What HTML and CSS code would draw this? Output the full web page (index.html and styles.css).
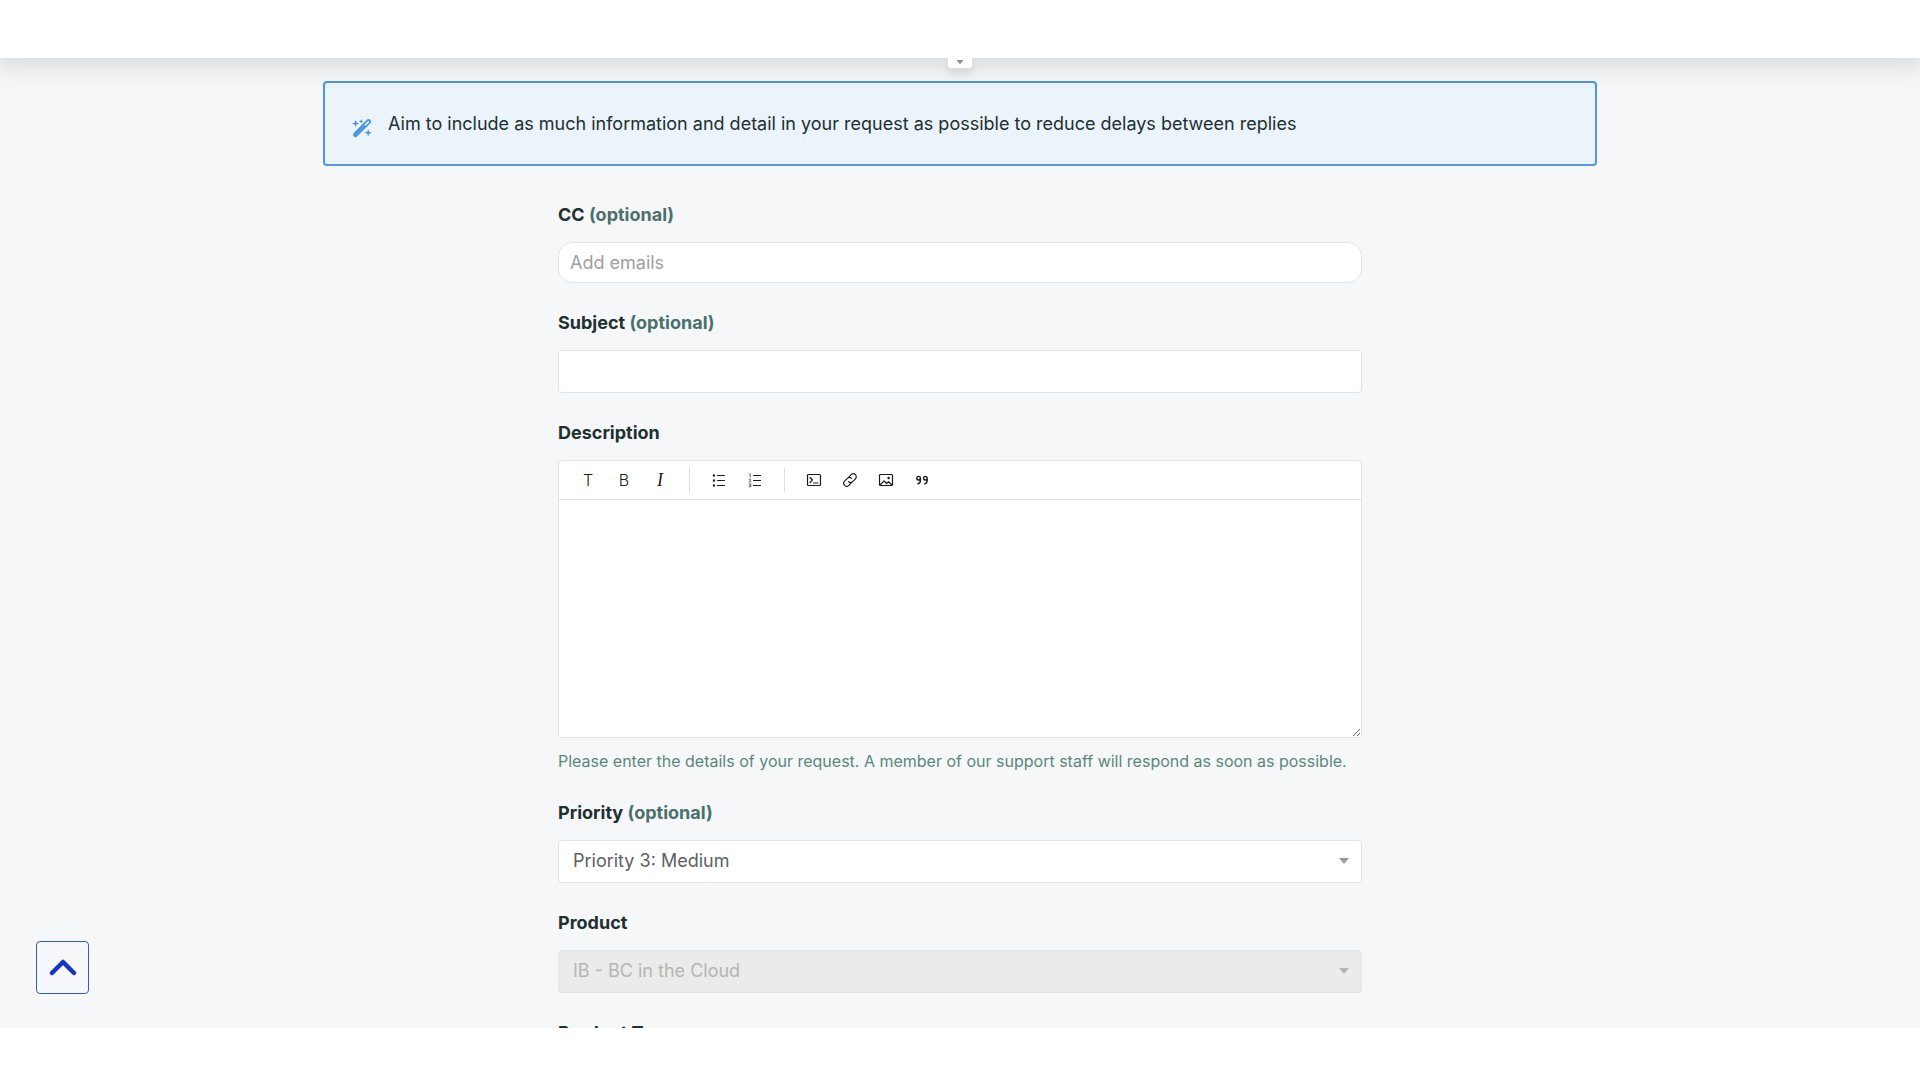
FILE: index.html
```html
<!DOCTYPE html>
<html lang="en">
<head>
  <meta charset="utf-8">
  <title>Submit a request</title>
  <link rel="stylesheet" href="styles.css">
</head>
<body>
  <header class="header">
    <button class="header-toggle" aria-label="Show menu"></button>
  </header>

  <main class="content">
    <div class="notice">
      <svg class="notice-icon" viewBox="0 0 20 20" aria-hidden="true">
        <path d="M3.6 16.6 L16.6 3.6" stroke="#4f95e0" stroke-width="5" stroke-linecap="round"/>
        <path d="M13.4 6.8 L16.4 3.8" stroke="#ebf3fb" stroke-width="1.6" stroke-linecap="round"/>
        <path fill="#4f95e0" d="M3.6 2 L4.6 4.6 L7.2 5.6 L4.6 6.6 L3.6 9.2 L2.6 6.6 L0 5.6 L2.6 4.6Z M9.2 1 L9.9 2.7 L11.6 3.4 L9.9 4.1 L9.2 5.8 L8.5 4.1 L6.8 3.4 L8.5 2.7Z M16.2 11.2 L17.2 13.8 L19.8 14.8 L17.2 15.8 L16.2 18.4 L15.2 15.8 L12.6 14.8 L15.2 13.8Z"/>
      </svg>
      <p class="notice-text">Aim to include as much information and detail in your request as possible to reduce delays between replies</p>
    </div>

    <form class="form">
      <div class="field">
        <label for="cc">CC <span class="optional">(optional)</span></label>
        <input type="text" id="cc" class="input input-cc" placeholder="Add emails">
      </div>

      <div class="field">
        <label for="subject">Subject <span class="optional">(optional)</span></label>
        <input type="text" id="subject" class="input">
      </div>

      <div class="field">
        <label for="description">Description</label>
        <div class="editor">
          <div class="toolbar">
            <button type="button" class="tool" aria-label="Text style">T</button>
            <button type="button" class="tool" aria-label="Bold">B</button>
            <button type="button" class="tool tool-italic" aria-label="Italic">I</button>
            <span class="separator"></span>
            <button type="button" class="tool" aria-label="Bulleted list">
              <svg viewBox="0 0 16 16"><path d="M6.5 3.5h7M6.5 8.5h7M6.5 13.5h7"/><path class="dots" d="M3 3.5h.01M3 8.5h.01M3 13.5h.01"/></svg>
            </button>
            <button type="button" class="tool" aria-label="Numbered list">
              <svg viewBox="0 0 16 16"><path d="M6.5 3.5h7M6.5 8.5h7M6.5 13.5h7"/><path class="thin" d="M2.2 2.4l1-.6v3.4M2 7.2h1.6v1L2 9.8h2M2 11.8h1.8v3H2M2.4 13.3h1.4"/></svg>
            </button>
            <span class="separator"></span>
            <button type="button" class="tool" aria-label="Code block">
              <svg viewBox="0 0 16 16"><rect x="1.5" y="2.5" width="13" height="11" rx="1"/><path d="M4 5.5L6.5 8 4 10.5M7.5 11h4.5"/></svg>
            </button>
            <button type="button" class="tool" aria-label="Link">
              <svg viewBox="0 0 16 16"><path d="M7 4.8l2.2-2.2a2.9 2.9 0 0 1 4.2 4.2L10.6 9.6a2.9 2.9 0 0 1-4.1 0M9 11.2l-2.2 2.2a2.9 2.9 0 0 1-4.2-4.2L5.4 6.4a2.9 2.9 0 0 1 4.1 0"/></svg>
            </button>
            <button type="button" class="tool" aria-label="Image">
              <svg viewBox="0 0 16 16"><rect x="1.5" y="2.5" width="13" height="11" rx="1"/><path d="M2.5 12.5L6 8.8l2.5 2.7 2-1.8 3 2.8"/><path class="dots" d="M10.6 6h.01"/></svg>
            </button>
            <button type="button" class="tool" aria-label="Quote">
              <svg viewBox="0 0 16 16"><path class="quote" d="M6.4 6.2a1.8 1.8 0 1 0-3.6 0 1.8 1.8 0 1 0 3.6 0v2c0 2-.8 3.2-2.4 3.6M13.2 6.2a1.8 1.8 0 1 0-3.6 0 1.8 1.8 0 1 0 3.6 0v2c0 2-.8 3.2-2.4 3.6"/></svg>
            </button>
          </div>
          <textarea id="description" class="editor-text"></textarea>
        </div>
        <p class="hint">Please enter the details of your request. A member of our support staff will respond as soon as possible.</p>
      </div>

      <div class="field">
        <label for="priority">Priority <span class="optional">(optional)</span></label>
        <div class="select-wrapper">
          <select id="priority" class="input">
            <option>Priority 3: Medium</option>
          </select>
        </div>
      </div>

      <div class="field">
        <label for="product">Product</label>
        <div class="select-wrapper disabled">
          <select id="product" class="input" disabled>
            <option>IB - BC in the Cloud</option>
          </select>
        </div>
      </div>

      <div class="field">
        <label for="product-type">Product Type</label>
        <div class="select-wrapper">
          <select id="product-type" class="input">
            <option>-</option>
          </select>
        </div>
      </div>
    </form>
  </main>

  <a href="#" class="back-to-top" aria-label="Back to top">
    <svg viewBox="0 0 28 20"><path d="M3 15L14 4l11 11"/></svg>
  </a>
</body>
</html>
```

FILE: styles.css
```css
* {
  box-sizing: border-box;
  margin: 0;
  padding: 0;
}

body {
  display: flex;
  flex-direction: column;
  height: 100vh;
  padding-bottom: 52px;
  background-color: #fff;
  color: #20302e;
  font-family: Inter, "Liberation Sans", sans-serif;
  font-size: 18px;
  line-height: 24px;
}

.header {
  position: relative;
  flex: none;
  height: 58px;
  background-color: #fff;
  box-shadow: 0 0 28px 6px rgba(0, 0, 0, 0.14);
  z-index: 1;
}

.header-toggle {
  position: absolute;
  top: 100%;
  left: 50%;
  width: 24px;
  height: 10px;
  border: none;
  border-radius: 0 0 3px 3px;
  background-color: #fff;
  box-shadow: 0 6px 10px rgba(0, 0, 0, 0.1);
  transform: translateX(-50%);
}

.header-toggle::before {
  content: "";
  display: block;
  width: 8px;
  height: 5px;
  margin: 0 auto 2px;
  background-color: #8a9097;
  clip-path: polygon(0 0, 100% 0, 50% 100%);
}

.content {
  flex: 1;
  min-height: 0;
  overflow: hidden;
  padding: 23px 24px 0;
  background-color: #f5f7f9;
}

.notice {
  display: flex;
  align-items: flex-start;
  gap: 16px;
  max-width: 1274px;
  margin: 0 auto 37px;
  padding: 29px 27px 26px;
  border: 2px solid #5096e1;
  border-radius: 4px;
  background-color: #ebf3fb;
}

.notice-icon {
  flex: none;
  width: 20px;
  height: 20px;
  margin-top: 6px;
}

.form {
  max-width: 804px;
  margin: 0 auto;
}

.field {
  margin-bottom: 28px;
}

label {
  display: block;
  margin-bottom: 15px;
  font-weight: 700;
}

.optional {
  color: #49706a;
}

.input {
  display: block;
  width: 100%;
  height: 43px;
  padding: 0 14px;
  border: 1px solid #e1e3e5;
  border-radius: 4px;
  background-color: #fff;
  color: #5c5f62;
  font: inherit;
  outline: none;
}

.input-cc {
  height: 41px;
  padding: 0 11px;
  border-radius: 14px;
}

.input::placeholder {
  color: #a0a0a0;
}

.input:focus {
  border-color: #5096e1;
}

.editor {
  border: 1px solid #e1e3e5;
  border-radius: 4px;
  background-color: #fff;
}

.toolbar {
  display: flex;
  align-items: center;
  height: 39px;
  padding: 0 11px;
  border-bottom: 1px solid #e1e3e5;
}

.tool {
  display: flex;
  justify-content: center;
  align-items: center;
  width: 36px;
  height: 36px;
  border: none;
  background: none;
  color: #1c1c1c;
  font-family: inherit;
  font-size: 16px;
  font-weight: 300;
  cursor: pointer;
}

.tool-italic {
  font-family: "Liberation Serif", serif;
  font-size: 18px;
  font-style: italic;
}

.tool svg {
  width: 16px;
  height: 16px;
  fill: none;
  stroke: #1c1c1c;
  stroke-width: 1.2;
  stroke-linecap: round;
  stroke-linejoin: round;
}

.tool .dots {
  stroke-width: 2.4;
}

.tool .thin {
  stroke-width: 0.6;
}

.tool .quote {
  stroke-width: 1.4;
}

.separator {
  width: 1px;
  height: 26px;
  margin: 0 11px;
  background-color: #dcdee0;
}

.editor-text {
  display: block;
  width: 100%;
  height: 237px;
  padding: 12px;
  border: none;
  border-radius: 4px;
  background: none;
  font: inherit;
  outline: none;
  resize: vertical;
}

.hint {
  margin-top: 11px;
  color: #5b877c;
  font-size: 16px;
}

.select-wrapper {
  position: relative;
}

.select-wrapper::after {
  content: "";
  position: absolute;
  top: 18px;
  right: 13px;
  width: 10px;
  height: 6px;
  background-color: #999;
  clip-path: polygon(0 0, 100% 0, 50% 100%);
  pointer-events: none;
}

select.input {
  padding-bottom: 2px;
  appearance: none;
}

.disabled .input {
  background-color: #ebebeb;
  color: #b5b5b5;
  opacity: 1;
}

.disabled::after {
  background-color: #b5b5b5;
}

.back-to-top {
  position: fixed;
  bottom: 86px;
  left: 36px;
  display: flex;
  justify-content: center;
  align-items: center;
  width: 53px;
  height: 53px;
  border: 1px solid #3556d6;
  border-radius: 4px;
  z-index: 2;
}

.back-to-top svg {
  width: 28px;
  height: 20px;
  fill: none;
  stroke: #1535c4;
  stroke-width: 4.5;
  stroke-linecap: round;
  stroke-linejoin: round;
}
```
